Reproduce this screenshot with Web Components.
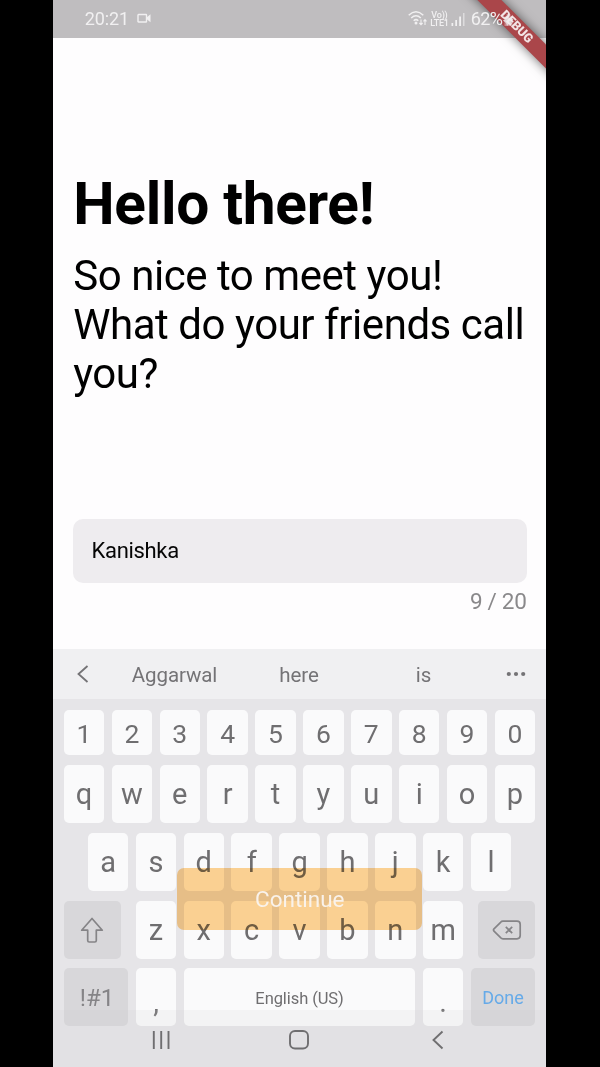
<!DOCTYPE html>
<html lang="en">
<head>
<meta charset="utf-8">
<title>Hello there</title>
<style>
html,body{margin:0;background:#000;height:1067px;overflow:hidden}
body{font-family:Roboto,"Noto Sans",sans-serif}
</style>
</head>
<body>
<phone-screen>
  <status-bar slot="status"></status-bar>
  <welcome-form slot="page"></welcome-form>
  <soft-keyboard slot="keyboard"></soft-keyboard>
  <continue-button slot="overlay">Continue</continue-button>
  <debug-banner slot="overlay">DEBUG</debug-banner>
</phone-screen>
<script>
const define = (name, html) => customElements.define(name, class extends HTMLElement {
  constructor(){ super(); this.attachShadow({mode:'open'}).innerHTML = html; }
});

define('phone-screen', `<style>
:host{display:flex;flex-direction:column;position:relative;width:492.5px;height:1067px;margin-left:53.3px;background:linear-gradient(#bfbdbf 38px,#fefdfe 38px);overflow:hidden;isolation:isolate}
</style><slot name="status"></slot><slot name="page"></slot><slot name="keyboard"></slot><slot name="overlay"></slot>`);

define('status-bar', `<style>
:host{display:flex;align-items:center;height:37.5px;flex:none;box-sizing:border-box;padding-left:31.5px;position:relative;z-index:4;color:#f1f0f1;font-size:18px;line-height:37px}
.cam{margin-left:8px}.wifi{margin-left:auto}.volte{display:flex;flex-direction:column;align-items:center;font-size:9px;line-height:8px;font-weight:500;margin:0 2px 0 3px;letter-spacing:-.2px}
.time{letter-spacing:-.15px}
.pct{margin:0 0 0 6px;width:32px;letter-spacing:-.7px}
.bat{margin:3px 32px 0 0}
svg{flex:none}
</style><span class="time">20:21</span>
<svg class="cam" width="14" height="12" viewBox="0 0 14 12"><rect x="1" y="1.500" width="8.5" height="7.5" rx=".5" fill="none" stroke="currentColor" stroke-width="1.4"/><path d="M9.5 4.500 13.5 1.3V9.2L9.5 6.1Z" fill="currentColor"/></svg>
<svg class="wifi" width="19" height="17" viewBox="0 0 19 17" fill="none" stroke="currentColor" stroke-width="1.5"><path d="M.7 5.2Q8 -1.6 15.3 5.2M3.2 8Q8 3.5 12.8 8M5.7 10.7Q8 8.6 10.3 10.7"/><circle cx="8" cy="13" r="1.5" fill="currentColor" stroke="none"/><path d="M13 9.5V14.5M11.4 13 13 14.7 14.6 13M17 15V9.7M15.5 11.3 17 9.6 18.5 11.3" stroke-width="1.1"/></svg>
<div class="volte"><span>Vo))</span><span>LTE1</span></div>
<svg width="14" height="14" viewBox="0 0 14 14" fill="currentColor"><path d="M.5 11h1.7v3H.5zM4.3 8H6v6H4.3zM8.2 4.5H10V14H8.2z"/><path d="M12 1h1.5v13H12z" opacity=".6"/></svg>
<span class="pct">62%</span><svg class="bat" width="11" height="15" viewBox="0 0 11 15" fill="currentColor" opacity=".85"><path d="M3.5 1h4v2.5H9.5v9.5H1.5V3.5h2z" opacity=".45"/><path d="M0 7.5 3 5.5 5 4 8 5.5 10.5 6 8.5 8.5 9 11 6 11 4 13 3 10z"/></svg>`);

define('debug-banner', `<style>
:host{position:absolute;right:0;top:0;width:110px;height:110px;overflow:hidden;z-index:3}
.strip{position:absolute;left:17px;top:19.5px;width:130px;height:16.5px;background:#aa464a;box-shadow:0 0 11px rgba(0,0,0,.55);transform:rotate(45deg);display:flex;align-items:center;justify-content:center;font-size:12.6px;font-weight:900;line-height:16px;color:#f3e4e5;box-sizing:border-box;padding-right:4px}
</style><div class="strip"><slot></slot></div>`);

define('text-field', `<style>
:host{display:flex;align-items:center;box-sizing:border-box;height:64px;border-radius:10px;background:#eeecef;padding:0 19px;color:#050505;font-size:22px;letter-spacing:-.33px}
</style><slot></slot>`);

define('welcome-form', `<style>
:host{display:flex;flex-direction:column;flex:none;height:611.5px;box-sizing:border-box;padding:132px 19.3px 0 19.3px;color:#000}
h1{margin:0 0 0 .6px;font-size:58.6px;line-height:69px;font-weight:700;white-space:nowrap;letter-spacing:-.27px}
p{margin:12.5px 0 0 .6px;font-size:42px;line-height:49.2px;white-space:nowrap;letter-spacing:-.45px}
text-field{margin-top:120px}
.count{align-self:flex-end;margin-top:5.5px;font-size:22.5px;line-height:27px;color:#8a898b;letter-spacing:-.3px}
</style><h1>Hello there!</h1><p>So nice to meet you!<br>What do your friends call<br>you?</p>
<text-field>Kanishka</text-field><div class="count">9 / 20</div>`);

define('key-cap', `<style>
:host{display:flex;align-items:center;justify-content:center;background:#fafafb;border-radius:5px;color:#6f6e70;font-size:29px;line-height:1;width:40.5px;flex:none;box-sizing:border-box;white-space:nowrap}
:host([fn]){background:#d8d7da;color:#858487}
:host([small]){font-size:16.5px;padding-top:3px;letter-spacing:-.08px}
:host([low]){padding-top:10px}
</style><slot></slot>`);

const keys = s => [...s].map(c => `<key-cap>${c}</key-cap>`).join('');
define('soft-keyboard', `<style>
:host{display:flex;flex-direction:column;flex:1;background:#e6e5e8;color:#6f6e70;position:relative}
.suggest{display:grid;grid-template-columns:59px 124.5px 124.5px 124.5px 60px;align-items:center;justify-items:center;height:50px;flex:none;background:#f0f0f2;font-size:20.5px;color:#747376;letter-spacing:-.1px}
.suggest span{padding-top:2px}
.row{display:flex;justify-content:space-between;margin:0 10.5px;height:58px;flex:none}
.nums{height:45px;margin-top:11px}.nums key-cap{font-size:26.5px;padding-top:3px}
.q{margin-top:10px}.a{margin:10px 34.5px 0}.z{margin-top:9.5px}.b{margin-top:9.8px}
.z .letters key-cap{padding-top:1px}
.letters{display:flex;gap:7.4px}
.shade{position:absolute;left:0;right:0;bottom:0;height:57.5px;background:rgba(205,205,208,.14)}
.nav{display:grid;grid-template-columns:1fr 1fr 1fr;width:415px;margin:-1.3px 0 0 38.5px;justify-items:center;align-items:center;height:30px;position:relative}
</style>
<div class="suggest"><svg width="14" height="20" viewBox="0 0 14 20" fill="none" stroke="currentColor" stroke-width="1.8"><path d="M11.5 2 2.5 10l9 8"/></svg><span>Aggarwal</span><span>here</span><span>is</span><svg width="20" height="6" fill="currentColor"><circle cx="2.8" cy="3" r="2.1"/><circle cx="10" cy="3" r="2.1"/><circle cx="17.2" cy="3" r="2.1"/></svg></div>
<div class="row nums">${keys('1234567890')}</div>
<div class="row q">${keys('qwertyuiop')}</div>
<div class="row a">${keys('asdfghjkl')}</div>
<div class="row z"><key-cap fn style="width:57px"><svg width="26" height="28" viewBox="0 0 26 28" fill="none" stroke="currentColor" stroke-width="1.7" stroke-linejoin="round"><path d="M13 2.5 23.3 14.2H17.3V24.5Q17.3 26 15.8 26H10.2Q8.7 26 8.7 24.5V14.2H2.7Z"/></svg></key-cap><div class="letters">${keys('zxcvbnm')}</div><key-cap fn style="width:57px"><svg width="30" height="20" viewBox="0 0 30 20" fill="none" stroke="currentColor" stroke-width="1.7" stroke-linejoin="round"><path d="M11 1.2H25Q28.2 1.2 28.2 4.4V15.6Q28.2 18.8 25 18.8H11Q9.6 18.8 8.6 17.7L2 11.2Q1 10 2 8.8L8.6 2.3Q9.6 1.2 11 1.2ZM13.8 6.8l6.4 6.4M20.2 6.8l-6.4 6.4"/></svg></key-cap></div>
<div class="row b"><key-cap fn style="width:64.5px;font-size:24px;padding:2px 0 0 2px">!#1</key-cap><key-cap low>,</key-cap><key-cap small style="width:231.5px">English (US)</key-cap><key-cap low>.</key-cap><key-cap fn style="width:64.5px;font-size:18px;padding-top:2px;color:#66aae8">Done</key-cap></div>
<div class="shade"></div>
<div class="nav"><svg width="20" height="20" stroke="currentColor" stroke-width="1.9"><path d="M2.8 1v18M10.200 1v18M17.500 1v18"/></svg><svg width="20" height="20" fill="none" stroke="currentColor" stroke-width="1.9"><rect x="1" y="1" width="18" height="17.5" rx="5"/></svg><svg width="14" height="20" viewBox="0 0 14 20" fill="none" stroke="currentColor" stroke-width="1.9"><path d="M11.5 1.5 2.5 10l9 8.5"/></svg></div>`);

define('continue-button', `<style>
:host{display:contents}
.fill,.label{position:absolute;left:124.200px;top:868px;width:244.5px;height:61.5px;border-radius:7px}
.fill{background:#ffd494;mix-blend-mode:multiply}
.label{display:flex;align-items:center;justify-content:center;color:#f9f2ea;font-size:22.5px}
</style><div class="fill"></div><div class="label"><slot></slot></div>`);
</script>
</body>
</html>
